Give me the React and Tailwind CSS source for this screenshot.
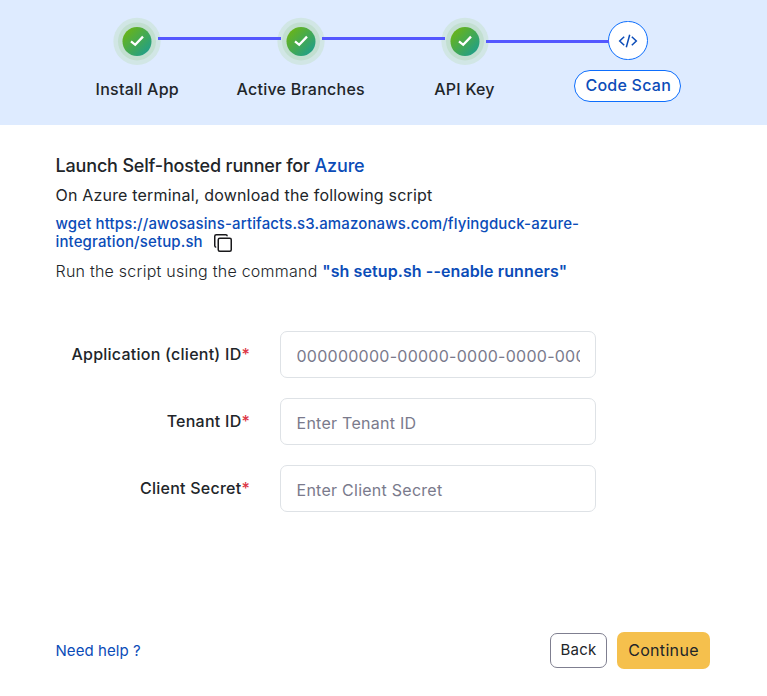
function DoneBadge({ id }) {
  return (
    <svg viewBox="0 0 48 48" className="h-12 w-12 shrink-0">
      <defs>
        <linearGradient id={id} x1="0.15" y1="0.15" x2="0.85" y2="0.85">
          <stop offset="0" stopColor="#66b31d" />
          <stop offset="1" stopColor="#24a083" />
        </linearGradient>
      </defs>
      <circle cx="24" cy="24.4" r="23.6" fill="#d1e6e5" />
      <circle cx="24" cy="24.4" r="19" fill="#c2dfd0" />
      <circle cx="24" cy="24.4" r="14.5" fill={`url(#${id})`} />
      <path d="M18 24.4 22.2 27.8 30 19.6" fill="none" stroke="#fff" strokeWidth="2.3" />
    </svg>
  );
}

function Line({ low }) {
  return (
    <div
      className={`z-10 -mr-[4.2px] -ml-[3px] h-[3px] w-[123px] shrink-0 bg-[#5457ff] ${low ? "mt-[23px]" : "mt-5"}`}
    />
  );
}

function Field({ label, placeholder }) {
  return (
    <div className="flex h-[47px]">
      <div className="w-[194.5px] pt-[11px] text-right text-base leading-6 font-medium tracking-[0.25px]">
        {label}
        <span className="text-[#dc3545]">*</span>
      </div>
      <input
        placeholder={placeholder}
        className="ml-[30px] h-[47px] w-[316px] rounded-[7px] border border-[#dee2e6] bg-white px-[15.5px] pt-[3px] text-base tracking-[0.26px] placeholder:text-[#7a7a8c] placeholder:opacity-100"
      />
    </div>
  );
}

export default function App() {
  return (
    <div className="flex h-[696px] w-[767px] flex-col overflow-hidden bg-white font-['Inter','Liberation_Sans',sans-serif] text-[#212529]">
      <header className="h-[125px] shrink-0 bg-[#deebff] pt-[17px]">
        <div className="flex h-12 items-start pl-[113.2px]">
          <DoneBadge id="done-install" />
          <Line />
          <DoneBadge id="done-branches" />
          <Line />
          <DoneBadge id="done-key" />
          <Line low />
          <div className="mt-1 ml-[3.6px] flex h-[39px] w-10 shrink-0 items-center justify-center rounded-full border border-[#0d6efd] bg-white">
            <svg viewBox="0 0 20 14" className="h-[14px] w-5" fill="none" stroke="#0b4cb8" strokeWidth="1.5">
              <path d="M6.2 2.8 1.7 7l4.5 4.2M13.8 2.8 18.3 7l-4.5 4.2M11.7.8 8.3 13.2" />
            </svg>
          </div>
        </div>
        <div className="mr-[58px] ml-[55px] grid grid-cols-4 pt-1 text-center text-base font-medium tracking-[0.24px]">
          <div className="pt-2 pl-px">Install App</div>
          <div className="pt-2 pl-px">Active Branches</div>
          <div className="pt-2 pl-[1.5px]">API Key</div>
          <div className="mx-auto mt-px flex h-8 w-[107px] items-center justify-center rounded-full border border-[#0d6efd] bg-white pb-0.5 pl-0.5 whitespace-nowrap text-[#0b4cb8]">
            Code Scan
          </div>
        </div>
      </header>

      <main className="px-[55.5px] pt-[29px]">
        <h1 className="text-lg leading-6 font-medium tracking-[-0.17px]">
          Launch Self-hosted runner for <span className="text-[#0b4cb8]">Azure</span>
        </h1>
        <p className="mt-[5px] text-base leading-6 tracking-[0.19px]">On Azure terminal, download the following script</p>
        <div className="mt-2 text-[15px] leading-[18px] font-medium tracking-[0.135px] text-[#0b4cb8]">
          <div className="whitespace-nowrap">wget https://awosasins-artifacts.s3.amazonaws.com/flyingduck-azure-</div>
          <div className="flex h-[18px] items-start">
            integration/setup.sh
            <svg viewBox="0 0 18 18" className="mt-px ml-[11.4px] h-[18px] w-[18px]" fill="none" stroke="#18181b" strokeWidth="1.5">
              <rect x="4.25" y="4.25" width="13" height="13" rx="1.5" />
              <path d="M2.2 13.2C1.2 13.2.75 12.8.75 11.8V2.3C.75 1.3 1.3.75 2.3.75h9.5c1 0 1.4.5 1.4 1.5" />
            </svg>
          </div>
        </div>
        <p className="mt-2 text-base leading-6 font-light tracking-[0.24px]">
          Run the script using the command{" "}
          <span className="font-semibold tracking-[0.1px] text-[#0b4cb8]">"sh setup.sh --enable runners"</span>
        </p>
        <form className="mt-12 flex flex-col gap-5">
          <Field label="Application (client) ID" placeholder="000000000-00000-0000-0000-00000000" />
          <Field label="Tenant ID" placeholder="Enter Tenant ID" />
          <Field label="Client Secret" placeholder="Enter Client Secret" />
        </form>
      </main>

      <footer className="mt-[120px] flex h-[37px] items-center pr-[57px] pl-[55.5px]">
        <a className="mr-auto pt-px text-[15px] tracking-[0.07px] text-[#0b4cb8]">Need help ?</a>
        <button className="mr-[10px] h-[35px] w-[57px] rounded-[7px] border border-[#7f7f90] bg-white pb-px text-[15px] tracking-[0.3px]">
          Back
        </button>
        <button className="h-[37px] w-[93px] rounded-[7px] bg-[#f5c04d] pb-0.5 text-base tracking-[0.32px]">Continue</button>
      </footer>
    </div>
  );
}
